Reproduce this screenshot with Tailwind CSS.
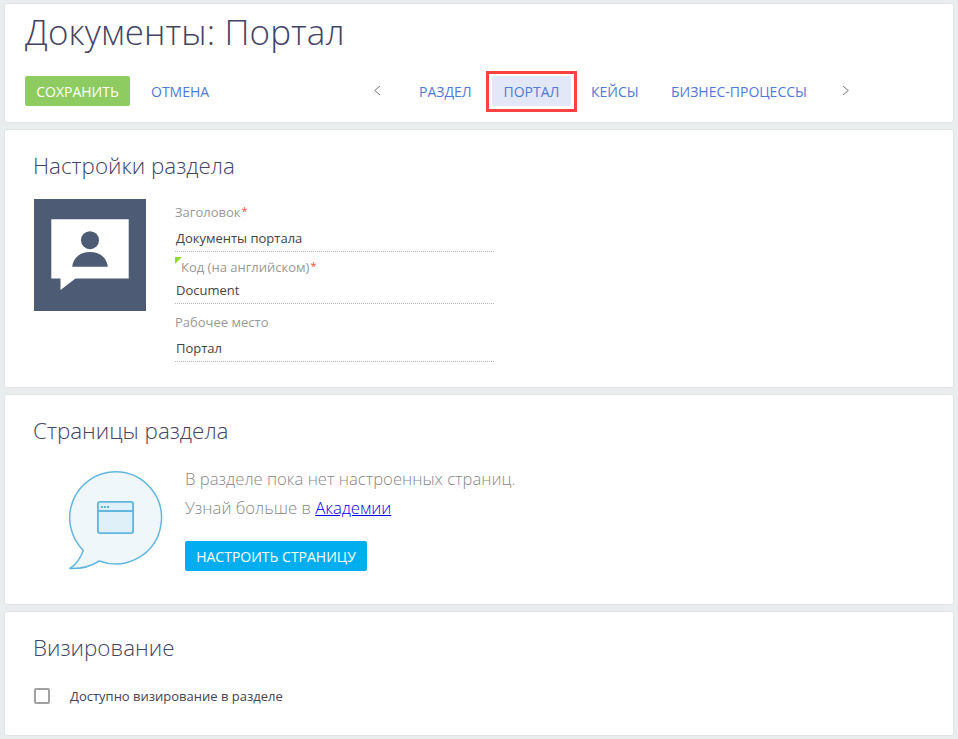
<!DOCTYPE html>
<html lang="ru">
<head>
<meta charset="utf-8">
<title>Документы: Портал</title>
<script src="https://cdn.jsdelivr.net/npm/@tailwindcss/browser@4"></script>
</head>
<body class="bg-[#e9edee] font-['Open_Sans','Noto_Sans',sans-serif] text-[13px] text-[#444]">
<main class="flex h-[739px] w-[958px] flex-col gap-[6px] overflow-hidden pt-[3px] pr-1 pl-1">

  <header class="h-[120px] shrink-0 rounded-[3px] border border-[#e2e5e6] bg-white pl-5">
    <h1 class="h-[54px] pt-px text-[35px] leading-[54px] font-light tracking-[0.12px] whitespace-nowrap text-[#444466]">Документы: Портал</h1>
    <div class="mt-[13px] flex h-[41px] items-center text-[14px] whitespace-nowrap text-[#4f7ad5]">
      <button class="mb-px h-[30px] w-[105px] rounded-[2px] bg-[#8ecb60] pt-px text-center text-white">СОХРАНИТЬ</button>
      <button class="ml-[21px] w-[59px] text-left">ОТМЕНА</button>
      <svg class="ml-[163px] h-[11px] w-[8px] -translate-y-px" viewBox="0 0 8 11" fill="none" stroke="#777"><path d="M7 1 1.700 5.500 7 10"/></svg>
      <nav class="ml-[38px] flex items-center">
        <a class="w-[53px]">РАЗДЕЛ</a>
        <a class="ml-[14px] flex h-[41px] w-[91px] items-center justify-center border-3 border-[#fa4244]"><span class="mb-px h-[30px] w-[79px] rounded-[2px] bg-[#e3e8f8] text-center leading-[31px]">ПОРТАЛ</span></a>
        <a class="ml-[14px] w-[48px]">КЕЙСЫ</a>
        <a class="ml-[32px] w-[135px]">БИЗНЕС-ПРОЦЕССЫ</a>
      </nav>
      <svg class="ml-[35px] h-[11px] w-[8px] -translate-y-px" viewBox="0 0 8 11" fill="none" stroke="#777"><path d="M2 1 7.300 5.500 2 10"/></svg>
    </div>
  </header>

  <section class="h-[259px] shrink-0 rounded-[3px] border border-[#e2e5e6] bg-white pt-5 pl-[29px]">
    <h2 class="-ml-px h-8 text-[22.4px] leading-8 font-light text-[#444466]">Настройки раздела</h2>
    <div class="mt-[17px] flex">
      <svg class="h-[112px] w-[112px]" viewBox="0 0 112 112"><path fill="#4d5b75" d="M0 0h112v112H0z"/><path fill="#fff" d="M17.300 20.300h77.400v59.200H41.500L26.500 91V79.500h-9.200z"/><circle cx="56" cy="41.200" r="9" fill="#4d5b75"/><path fill="#4d5b75" d="M38.200 67.800C39.500 58.500 46 53 56 53s16.500 5.500 17.800 14.800z"/></svg>
      <div class="ml-[29px] w-[320px] pt-1">
        <div>
          <label class="block h-[18px] leading-[18px] text-[#999]">Заголовок<span class="relative -top-[2px] left-px text-[11px] leading-none text-[#ef4b3e]">*</span></label>
          <div class="mt-[5px] h-[25px] pl-px leading-[25px]">Документы портала</div>
          <svg class="block h-px w-full"><path d="M0 .5H320" stroke="#b5b5b5" stroke-dasharray="1 1"/></svg>
        </div>
        <div class="relative pt-[6px]">
          <svg class="absolute top-[5px] left-0 h-[7px] w-[7px]" viewBox="0 0 7 7"><path fill="#8edb2e" d="M0 0h7L0 7z"/></svg>
          <label class="block h-[18px] pl-[6px] leading-[18px] text-[#999]">Код (на английском)<span class="relative -top-[2px] left-px text-[11px] leading-none text-[#ef4b3e]">*</span></label>
          <div class="h-[27px] pl-px leading-[29px]">Document</div>
          <svg class="block h-px w-full"><path d="M0 .5H320" stroke="#b5b5b5" stroke-dasharray="1 1"/></svg>
        </div>
        <div class="pt-[9px]">
          <label class="block h-[18px] leading-[18px] text-[#999]">Рабочее место</label>
          <div class="mt-[4px] h-[26px] pl-px leading-[26px]">Портал</div>
          <svg class="block h-px w-full"><path d="M0 .5H320" stroke="#b5b5b5" stroke-dasharray="1 1"/></svg>
        </div>
      </div>
    </div>
  </section>

  <section class="h-[211px] shrink-0 rounded-[3px] border border-[#e2e5e6] bg-white pt-5 pl-[29px]">
    <h2 class="-ml-px h-8 text-[22.4px] leading-8 font-light text-[#444466]">Страницы раздела</h2>
    <div class="mt-[18px] flex">
      <svg class="mt-[5px] ml-[34px] h-[102px] w-[96px]" viewBox="0 0 96 102" fill="#eff7fb" stroke="#63b7df" stroke-width="1.500" stroke-linejoin="round"><path d="M15.300 80.500A46.100 46.100 0 0 1 47.500 1.700A46.100 46.100 0 1 1 31.300 91C22 97 12 98.900 1.800 98.500 8.500 94.500 12.500 88 15.300 80.500z"/><rect x="29.900" y="31.900" width="35.200" height="31.200" rx="2" fill="#dff0f8" stroke-width="1.900"/><path d="M30 41H65" stroke-width="1.900"/><path d="M33 37h2m1 0h2m1 0h2" stroke-width="2"/></svg>
      <div class="-mt-px ml-[21px] text-[16.7px] leading-[29px] font-light text-[#888]">
        <p class="whitespace-nowrap">В разделе пока нет настроенных страниц.</p>
        <p class="whitespace-nowrap">Узнай больше в <a class="text-[#0000ee] underline">Академии</a></p>
        <button class="mt-[19px] block h-[30px] w-[182px] rounded-[2px] bg-[#00aeef] pt-px text-center text-[14px] leading-[30px] font-normal text-white">НАСТРОИТЬ СТРАНИЦУ</button>
      </div>
    </div>
  </section>

  <section class="h-[125px] shrink-0 rounded-[3px] border border-[#e2e5e6] bg-white pt-5 pl-[29px]">
    <h2 class="-ml-px h-8 text-[22.4px] leading-8 font-light text-[#444466]">Визирование</h2>
    <label class="mt-[22px] flex h-5 items-center text-[#444455]"><span class="h-4 w-4 rounded-[2px] border-2 border-[#a0a0a0] bg-white"></span><span class="ml-5 pt-[2px]">Доступно визирование в разделе</span></label>
  </section>
</main>
</body>
</html>
